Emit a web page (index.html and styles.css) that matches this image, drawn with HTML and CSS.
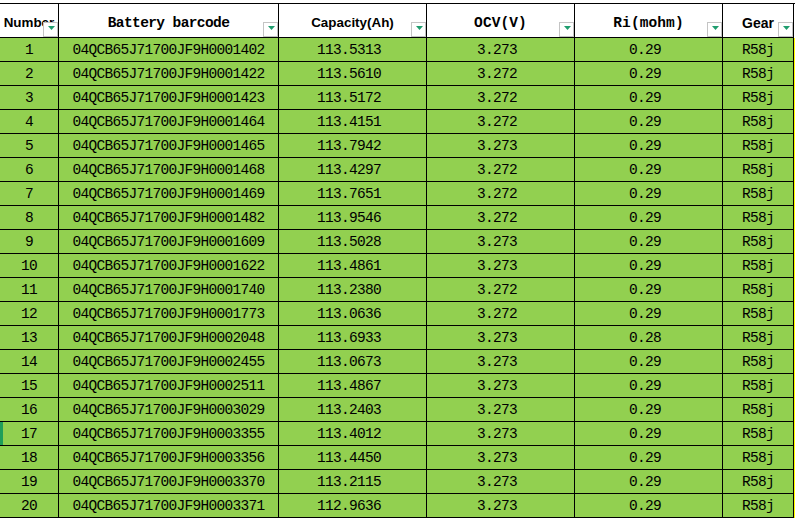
FILE: index.html
```html
<!DOCTYPE html>
<html>
<head>
<meta charset="utf-8">
<link rel="stylesheet" href="styles.css">
</head>
<body>
<div class="sheet">
  <div class="row head">
    <div class="cell hc sans">Number<span class="flt"><svg width="7" height="4" viewBox="0 0 7 4"><polygon points="0,0 7,0 3.5,4" fill="#1f9d6e"/></svg></span></div>
    <div class="cell hc mono">Battery barcode<span class="flt"><svg width="7" height="4" viewBox="0 0 7 4"><polygon points="0,0 7,0 3.5,4" fill="#1f9d6e"/></svg></span></div>
    <div class="cell hc sans">Capacity(Ah)<span class="flt"><svg width="7" height="4" viewBox="0 0 7 4"><polygon points="0,0 7,0 3.5,4" fill="#1f9d6e"/></svg></span></div>
    <div class="cell hc mono wide">OCV(V)<span class="flt"><svg width="7" height="4" viewBox="0 0 7 4"><polygon points="0,0 7,0 3.5,4" fill="#1f9d6e"/></svg></span></div>
    <div class="cell hc mono wide">Ri(mohm)<span class="flt"><svg width="7" height="4" viewBox="0 0 7 4"><polygon points="0,0 7,0 3.5,4" fill="#1f9d6e"/></svg></span></div>
    <div class="cell hc sans big">Gear<span class="flt"><svg width="7" height="4" viewBox="0 0 7 4"><polygon points="0,0 7,0 3.5,4" fill="#1f9d6e"/></svg></span></div>
  </div>
  <div class="row"><div class="cell">1</div><div class="cell">04QCB65J71700JF9H0001402</div><div class="cell num">113.5313</div><div class="cell num">3.273</div><div class="cell num">0.29</div><div class="cell">R58j</div></div>
  <div class="row"><div class="cell">2</div><div class="cell">04QCB65J71700JF9H0001422</div><div class="cell num">113.5610</div><div class="cell num">3.272</div><div class="cell num">0.29</div><div class="cell">R58j</div></div>
  <div class="row"><div class="cell">3</div><div class="cell">04QCB65J71700JF9H0001423</div><div class="cell num">113.5172</div><div class="cell num">3.272</div><div class="cell num">0.29</div><div class="cell">R58j</div></div>
  <div class="row"><div class="cell">4</div><div class="cell">04QCB65J71700JF9H0001464</div><div class="cell num">113.4151</div><div class="cell num">3.272</div><div class="cell num">0.29</div><div class="cell">R58j</div></div>
  <div class="row"><div class="cell">5</div><div class="cell">04QCB65J71700JF9H0001465</div><div class="cell num">113.7942</div><div class="cell num">3.273</div><div class="cell num">0.29</div><div class="cell">R58j</div></div>
  <div class="row"><div class="cell">6</div><div class="cell">04QCB65J71700JF9H0001468</div><div class="cell num">113.4297</div><div class="cell num">3.272</div><div class="cell num">0.29</div><div class="cell">R58j</div></div>
  <div class="row"><div class="cell">7</div><div class="cell">04QCB65J71700JF9H0001469</div><div class="cell num">113.7651</div><div class="cell num">3.272</div><div class="cell num">0.29</div><div class="cell">R58j</div></div>
  <div class="row"><div class="cell">8</div><div class="cell">04QCB65J71700JF9H0001482</div><div class="cell num">113.9546</div><div class="cell num">3.272</div><div class="cell num">0.29</div><div class="cell">R58j</div></div>
  <div class="row"><div class="cell">9</div><div class="cell">04QCB65J71700JF9H0001609</div><div class="cell num">113.5028</div><div class="cell num">3.273</div><div class="cell num">0.29</div><div class="cell">R58j</div></div>
  <div class="row"><div class="cell">10</div><div class="cell">04QCB65J71700JF9H0001622</div><div class="cell num">113.4861</div><div class="cell num">3.273</div><div class="cell num">0.29</div><div class="cell">R58j</div></div>
  <div class="row"><div class="cell">11</div><div class="cell">04QCB65J71700JF9H0001740</div><div class="cell num">113.2380</div><div class="cell num">3.272</div><div class="cell num">0.29</div><div class="cell">R58j</div></div>
  <div class="row"><div class="cell">12</div><div class="cell">04QCB65J71700JF9H0001773</div><div class="cell num">113.0636</div><div class="cell num">3.272</div><div class="cell num">0.29</div><div class="cell">R58j</div></div>
  <div class="row"><div class="cell">13</div><div class="cell">04QCB65J71700JF9H0002048</div><div class="cell num">113.6933</div><div class="cell num">3.273</div><div class="cell num">0.28</div><div class="cell">R58j</div></div>
  <div class="row"><div class="cell">14</div><div class="cell">04QCB65J71700JF9H0002455</div><div class="cell num">113.0673</div><div class="cell num">3.273</div><div class="cell num">0.29</div><div class="cell">R58j</div></div>
  <div class="row"><div class="cell">15</div><div class="cell">04QCB65J71700JF9H0002511</div><div class="cell num">113.4867</div><div class="cell num">3.273</div><div class="cell num">0.29</div><div class="cell">R58j</div></div>
  <div class="row"><div class="cell">16</div><div class="cell">04QCB65J71700JF9H0003029</div><div class="cell num">113.2403</div><div class="cell num">3.273</div><div class="cell num">0.29</div><div class="cell">R58j</div></div>
  <div class="row sel"><div class="cell">17</div><div class="cell">04QCB65J71700JF9H0003355</div><div class="cell num">113.4012</div><div class="cell num">3.273</div><div class="cell num">0.29</div><div class="cell">R58j</div></div>
  <div class="row"><div class="cell">18</div><div class="cell">04QCB65J71700JF9H0003356</div><div class="cell num">113.4450</div><div class="cell num">3.273</div><div class="cell num">0.29</div><div class="cell">R58j</div></div>
  <div class="row"><div class="cell">19</div><div class="cell">04QCB65J71700JF9H0003370</div><div class="cell num">113.2115</div><div class="cell num">3.273</div><div class="cell num">0.29</div><div class="cell">R58j</div></div>
  <div class="row"><div class="cell">20</div><div class="cell">04QCB65J71700JF9H0003371</div><div class="cell num">112.9636</div><div class="cell num">3.273</div><div class="cell num">0.29</div><div class="cell">R58j</div></div>
</div>
</body>
</html>
```
FILE: styles.css
```css
html, body {
  margin: 0;
  padding: 0;
  background: #ffffff;
}
body {
  padding-top: 3px;
  width: 795px;
  height: 515px;
  overflow: hidden;
}
.sheet {
  width: 795px;
  background: linear-gradient(#ffffff 0 34px, #ffff00 34px);
  border-top: 1px solid #000;
  position: relative;
}
.row {
  display: grid;
  grid-template-columns: 59px 220px 148px 148px 148px 71px;
  width: 794px;
  height: 24px;
  background: #92d050;
}
.row.head {
  height: 34px;
  background: #ffffff;
}
.cell {
  box-sizing: border-box;
  border-right: 1px solid #000;
  border-bottom: 1px solid #000;
  display: flex;
  align-items: center;
  justify-content: center;
  white-space: nowrap;
  overflow: hidden;
  font-family: "Liberation Mono", monospace;
  font-size: 14.5px;
  letter-spacing: -0.7px;
  color: #000;
  padding-top: 1px;
}
.cell.num {
  padding-right: 7px;
}
.row.sel .cell:first-child {
  box-shadow: inset 3px 0 0 #1e9e5a;
}
.hc {
  position: relative;
  padding-top: 4px;
  font-weight: bold;
}
.hc.sans {
  font-family: "Liberation Sans", Arial, sans-serif;
  font-size: 13.4px;
  letter-spacing: 0;
}
.hc.big {
  font-size: 14px;
}
.hc.mono {
  font-size: 14.5px;
  letter-spacing: -0.6px;
}
.hc.wide {
  letter-spacing: 0.1px;
}
.flt {
  position: absolute;
  right: 0;
  bottom: 0;
  width: 15px;
  height: 15px;
  box-sizing: border-box;
  border: 1px solid #c4c4c4;
  background: #ffffff;
  display: flex;
  justify-content: center;
  padding-top: 3px;
}
.flt svg {
  display: block;
  margin-left: 1px;
}
```
